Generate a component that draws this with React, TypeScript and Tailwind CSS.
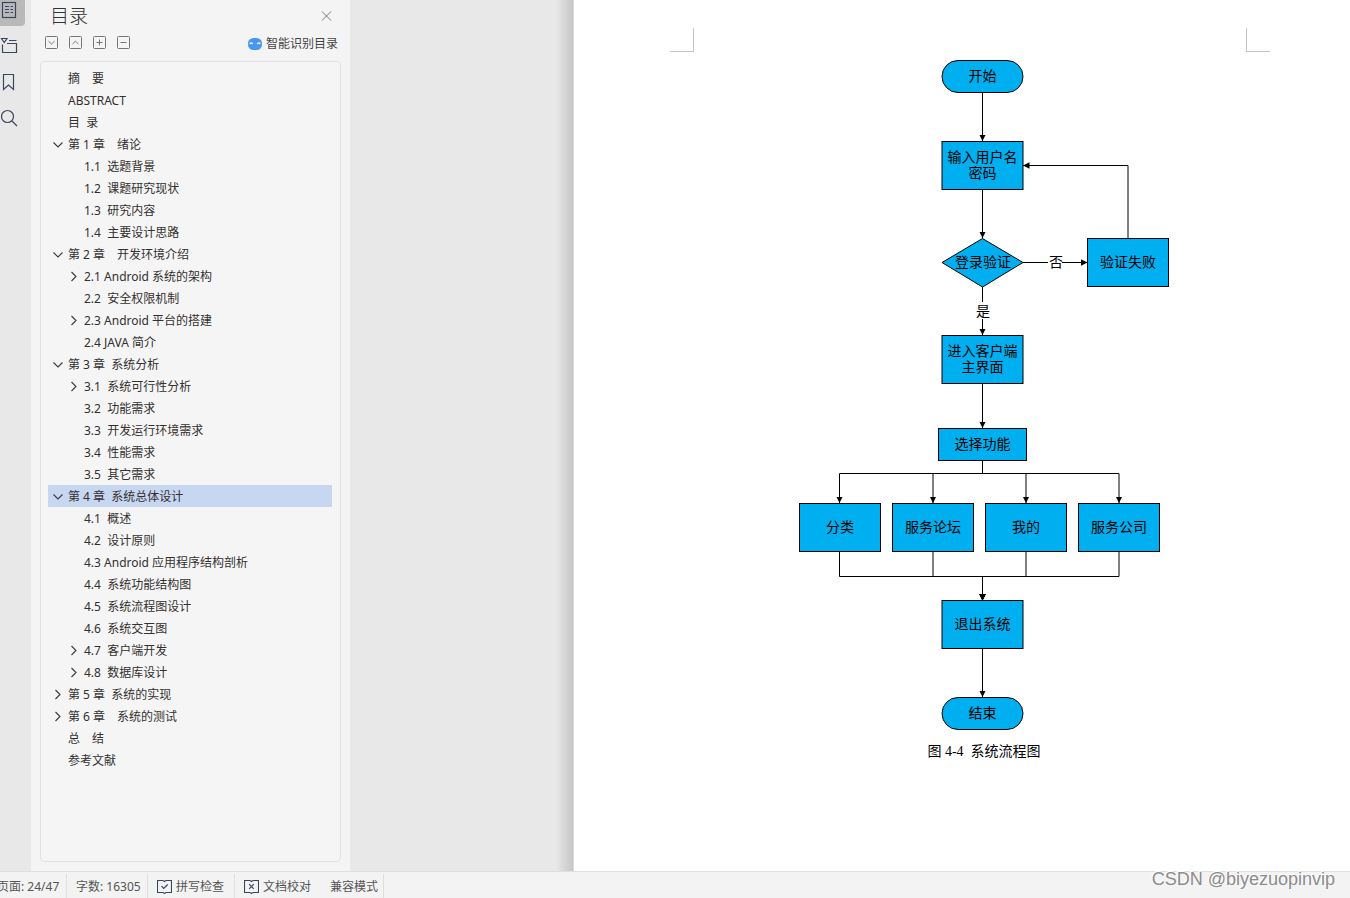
import { useState, type ReactNode } from "react";

type Entry = { text: string; level: 0 | 1; state?: "open" | "closed" };

const entries: Entry[] = [
  { text: "摘　要", level: 0 },
  { text: "ABSTRACT", level: 0 },
  { text: "目  录", level: 0 },
  { text: "第 1 章　绪论", level: 0, state: "open" },
  { text: "1.1  选题背景", level: 1 },
  { text: "1.2  课题研究现状", level: 1 },
  { text: "1.3  研究内容", level: 1 },
  { text: "1.4  主要设计思路", level: 1 },
  { text: "第 2 章　开发环境介绍", level: 0, state: "open" },
  { text: "2.1 Android 系统的架构", level: 1, state: "closed" },
  { text: "2.2  安全权限机制", level: 1 },
  { text: "2.3 Android 平台的搭建", level: 1, state: "closed" },
  { text: "2.4 JAVA 简介", level: 1 },
  { text: "第 3 章  系统分析", level: 0, state: "open" },
  { text: "3.1  系统可行性分析", level: 1, state: "closed" },
  { text: "3.2  功能需求", level: 1 },
  { text: "3.3  开发运行环境需求", level: 1 },
  { text: "3.4  性能需求", level: 1 },
  { text: "3.5  其它需求", level: 1 },
  { text: "第 4 章  系统总体设计", level: 0, state: "open" },
  { text: "4.1  概述", level: 1 },
  { text: "4.2  设计原则", level: 1 },
  { text: "4.3 Android 应用程序结构剖析", level: 1 },
  { text: "4.4  系统功能结构图", level: 1 },
  { text: "4.5  系统流程图设计", level: 1 },
  { text: "4.6  系统交互图", level: 1 },
  { text: "4.7  客户端开发", level: 1, state: "closed" },
  { text: "4.8  数据库设计", level: 1, state: "closed" },
  { text: "第 5 章  系统的实现", level: 0, state: "closed" },
  { text: "第 6 章　系统的测试", level: 0, state: "closed" },
  { text: "总　结", level: 0 },
  { text: "参考文献", level: 0 },
];

function Chevron({ state }: { state?: "open" | "closed" }) {
  return (
    <svg width="12" height="12" viewBox="0 0 12 12" fill="none" stroke="#3a3a3a" strokeWidth="1.1" className="shrink-0" aria-hidden="true">
      {state === "open" && <path d="M1.5 3.5 6 8l4.5-4.5" />}
      {state === "closed" && <path d="M3.5 1 8 5.500 3.500 10" />}
    </svg>
  );
}

function ToolButton({ label, d }: { label: string; d: string }) {
  return (
    <button type="button" aria-label={label} className="size-[13px]">
      <svg width="13" height="13" viewBox="0 0 13 13" fill="none" stroke="#777" aria-hidden="true">
        <rect x="0.5" y="0.5" width="12" height="12" rx="1" />
        <path d={d} />
      </svg>
    </button>
  );
}

function Rail() {
  return (
    <nav aria-label="侧边工具" className="flex w-[31px] shrink-0 flex-col bg-[#e8e8e8]">
      <button type="button" aria-label="目录" className="h-[26px] w-[25px] rounded-br bg-[#b9b9b9]">
        <svg width="18" height="26" viewBox="0 0 18 26" fill="none" stroke="#3b4560" aria-hidden="true">
          <rect x="2.5" y="2.5" width="13" height="15" strokeWidth="1.2" />
          <path d="M5 6.500h4M5 9.500h4M5 12.500h4M10.500 6.500h2.500M10.500 9.500h2.500M10.500 12.500h2.500" />
        </svg>
      </button>
      <div className="flex flex-col gap-3 pt-2">
        <button type="button" aria-label="章节" className="h-6 w-[25px]">
          <svg width="18" height="24" viewBox="0 0 18 24" fill="none" stroke="#3b4560" strokeWidth="1.2" aria-hidden="true">
            <path d="M1.500 4.500h5.500L4.250 8.500zM9 6.500h7.500M2.500 10.500v8h14v-9H7" />
          </svg>
        </button>
        <button type="button" aria-label="书签" className="h-6 w-[25px]">
          <svg width="18" height="24" viewBox="0 0 18 24" fill="none" stroke="#3b4560" strokeWidth="1.2" aria-hidden="true">
            <path d="M3.500 4.500h10v15l-5-4.500-5 4.500z" />
          </svg>
        </button>
        <button type="button" aria-label="查找" className="h-6 w-[25px]">
          <svg width="18" height="24" viewBox="0 0 18 24" fill="none" stroke="#3b4560" strokeWidth="1.2" aria-hidden="true">
            <circle cx="7.5" cy="10.5" r="6" />
            <path d="m12 15 5 5" />
          </svg>
        </button>
      </div>
    </nav>
  );
}

function OutlinePanel() {
  const [selected, setSelected] = useState(19);
  return (
    <aside className="flex w-[319px] shrink-0 flex-col bg-[#f4f4f4] px-[9px] pb-[9px]">
      <header className="flex h-8 items-center justify-between pr-[9px] pl-[10px]">
        <h1 className="text-[19px] leading-8 font-light text-[#333]">目录</h1>
        <button type="button" aria-label="关闭" className="size-[11px]">
          <svg width="11" height="11" viewBox="0 0 11 11" stroke="#777" aria-hidden="true">
            <path d="m1 .5 9 9M10 .5l-9 9" />
          </svg>
        </button>
      </header>
      <div className="flex h-[22px] items-start justify-between pt-1 pr-[3px] pl-[5px]">
        <div className="flex gap-[11px]">
          <ToolButton label="展开" d="M3.5 5.200 6.500 8l3-2.800" />
          <ToolButton label="收起" d="M3.5 8 6.500 5.200l3 2.800" />
          <ToolButton label="升级" d="M3.5 6.500h6M6.500 3.500v6" />
          <ToolButton label="降级" d="M3.5 6.500h6" />
        </div>
        <button type="button" className="flex items-center gap-1 text-xs text-[#444]">
          <svg width="14" height="12" viewBox="0 0 14 12" aria-hidden="true">
            <rect width="14" height="12" rx="5.5" fill="#4a97f0" />
            <path d="M1.800 6.200c.4-1.700 2.400-1.700 2.800 0M9.400 6.200c.4-1.700 2.400-1.700 2.800 0" fill="none" stroke="#fff" strokeWidth="1.2" />
          </svg>
          智能识别目录
        </button>
      </div>
      <ul className="mt-[7px] flex-1 rounded border border-[#e1e1e1] bg-[#f5f5f5] pt-[5px] pr-2 pb-[5px] pl-[7px]">
        {entries.map((e, i) => (
          <li key={e.text}>
            <button
              type="button"
              onClick={() => setSelected(i)}
              className={`flex h-[22px] w-full items-center gap-1 pt-0.5 text-left text-xs whitespace-pre text-[#33302f] ${e.level === 0 ? "pl-1" : "pl-5"} ${i === selected ? "bg-[#c8d7f1]" : ""}`}
            >
              <Chevron state={e.state} />
              {e.text}
            </button>
          </li>
        ))}
      </ul>
    </aside>
  );
}

type BoxProps = { x: number; y: number; w?: number; h?: number; r?: number; lines: string[] };

function Box({ x, y, w = 81, h = 48, r = 0, lines }: BoxProps) {
  const top = y + h / 2 + 4 - (lines.length - 1) * 8;
  return (
    <g>
      <rect x={x} y={y} width={w} height={h} rx={r} fill="#00aff0" stroke="#000" />
      {lines.map((line, i) => (
        <text key={line} x={x + w / 2} y={top + i * 16} textAnchor="middle">
          {line}
        </text>
      ))}
    </g>
  );
}

const branches = [
  { x: 41.5, name: "分类" },
  { x: 135, name: "服务论坛" },
  { x: 228, name: "我的" },
  { x: 321, name: "服务公司" },
];

const connectors = [
  "M184.500 33v48",
  "M184.500 130v48",
  "M225 202.500h25M264 202.500h25.500",
  "M330 178V105.500H225",
  "M184.500 227v15M184.500 259v16",
  "M184.500 324v44",
  "M184.500 589v48",
];

function FlowChart() {
  return (
    <svg width="372" height="672" viewBox="0 0 372 672" className="text-[14px]" role="img" aria-label="系统流程图">
      <defs>
        <marker id="arrow" viewBox="0 0 6 6" refX="6" refY="3" markerWidth="6.5" markerHeight="6.5" markerUnits="userSpaceOnUse" orient="auto">
          <path d="M0 0 6 3 0 6z" />
        </marker>
      </defs>
      <g fill="none" stroke="#000">
        {connectors.map((d) => (
          <path key={d} d={d} markerEnd="url(#arrow)" />
        ))}
        {branches.map((b) => (
          <g key={b.name}>
            <path d={`M184.500 401v12.500H${b.x}V443`} markerEnd="url(#arrow)" />
            <path d={`M${b.x} 492v24.500H184.500V540.500`} markerEnd="url(#arrow)" />
          </g>
        ))}
      </g>
      <Box x={144} y={0.5} h={32} r={16} lines={["开始"]} />
      <Box x={144} y={81.5} lines={["输入用户名", "密码"]} />
      <path d="M184.500 178.500 225 202.500 184.500 227 144 202.500z" fill="#00aff0" stroke="#000" />
      <text x="185" y="206.5" textAnchor="middle">登录验证</text>
      <text x="258" y="206.5" textAnchor="middle">否</text>
      <text x="185" y="255.5" textAnchor="middle">是</text>
      <Box x={289.5} y={178.5} lines={["验证失败"]} />
      <Box x={144} y={275.5} lines={["进入客户端", "主界面"]} />
      <Box x={140.5} y={368.5} w={88} h={32} lines={["选择功能"]} />
      {branches.map((b, i) => (
        <Box key={b.name} x={1.5 + i * 93} y={443.5} lines={[b.name]} />
      ))}
      <Box x={144} y={540.5} lines={["退出系统"]} />
      <Box x={144} y={637.5} h={32} r={16} lines={["结束"]} />
    </svg>
  );
}

function DocumentPage() {
  return (
    <main className="flex-1 bg-white pt-7 pr-20 pl-24">
      <div className="flex justify-between" aria-hidden="true">
        <div className="size-6 border-r border-b border-[#c4c4c4]" />
        <div className="size-6 border-b border-l border-[#c4c4c4]" />
      </div>
      <figure className="mt-2 flex flex-col items-center pl-7">
        <FlowChart />
        <figcaption className="mt-2 font-['Liberation_Serif','Noto_Sans_CJK_SC',serif] text-[14px] leading-6 whitespace-pre text-black">
          图 4-4  系统流程图
        </figcaption>
      </figure>
    </main>
  );
}

function CheckIcon({ d }: { d: string }) {
  return (
    <svg width="15" height="15" viewBox="0 0 15 15" fill="none" stroke="#3b4560" aria-hidden="true">
      <path d="M6 1.500H.5v12H6l1.500 1 1.500-1h5.500v-12H9l-1.500 1z" strokeWidth="1.1" />
      <path d={d} strokeWidth="1.2" />
    </svg>
  );
}

function StatusItem({ className, children }: { className: string; children: ReactNode }) {
  return <div className={`flex items-center border-r border-[#dedede] pt-px ${className}`}>{children}</div>;
}

function StatusBar() {
  return (
    <footer className="flex h-[27px] overflow-hidden border-t border-[#dfdfdf] bg-[#f3f3f3] pt-0.5 text-xs whitespace-nowrap text-[#555]">
      <StatusItem className="-ml-[3px] w-[70px]">页面: 24/47</StatusItem>
      <StatusItem className="w-[81px] pl-[9px]">字数: 16305</StatusItem>
      <StatusItem className="w-[87px] pl-[9px]">
        <button type="button" className="flex items-center gap-1">
          <CheckIcon d="m4.500 7.200 2.200 2.300 4-4" />
          拼写检查
        </button>
      </StatusItem>
      <StatusItem className="w-[149px] gap-[19px] pl-[9px]">
        <button type="button" className="flex items-center gap-1">
          <CheckIcon d="m5.200 5.200 4.600 4.600M9.800 5.200 5.200 9.800" />
          文档校对
        </button>
        <span>兼容模式</span>
      </StatusItem>
    </footer>
  );
}

export default function App() {
  return (
    <div className="relative flex min-h-screen flex-col bg-[#e8e8e8] font-['Noto_Sans','Noto_Sans_CJK_SC',sans-serif]">
      <div className="flex flex-1">
        <Rail />
        <OutlinePanel />
        <div className="flex w-56 shrink-0 justify-end">
          <div className="w-[18px] border-r border-[#dcdcdc] bg-linear-to-r from-[#e8e8e8] to-[#c6c6c6]" />
        </div>
        <DocumentPage />
      </div>
      <StatusBar />
      <p className="absolute right-[15px] bottom-[7px] font-['Liberation_Sans',sans-serif] text-lg leading-6 text-[#8c8c8c] [text-shadow:-1px_-1px_0_#fff]">
        CSDN @biyezuopinvip
      </p>
    </div>
  );
}
